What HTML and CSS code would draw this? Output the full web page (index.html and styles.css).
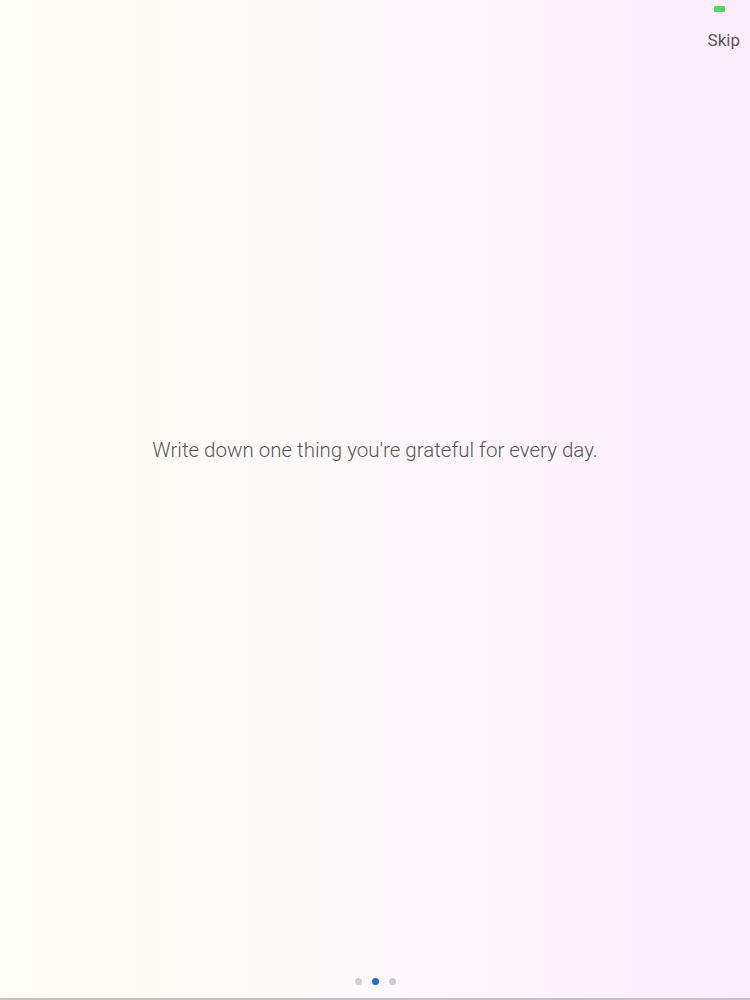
FILE: index.html
```html
<!DOCTYPE html>
<html>
<head>
<meta charset="utf-8">
<link rel="stylesheet" href="styles.css">
</head>
<body>
<div class="screen">
  <div class="status"><span class="battery"></span></div>
  <div class="topbar"><span class="skip">Skip</span></div>
  <div class="content">
    <p class="message">Write down one thing you're grateful for every day.</p>
  </div>
  <div class="pager">
    <span class="dot"></span>
    <span class="dot active"></span>
    <span class="dot"></span>
  </div>
  <div class="bottom-line"></div>
</div>
</body>
</html>
```
FILE: styles.css
```css
html, body {
  margin: 0;
  padding: 0;
}
.screen {
  width: 750px;
  height: 1000px;
  display: flex;
  flex-direction: column;
  background: linear-gradient(to right, #fffdf5 0%, #fefafb 45%, #fcedfd 100%);
  font-family: "Roboto", "Liberation Sans", sans-serif;
  color: #555558;
}
.status {
  height: 20px;
  display: flex;
  justify-content: flex-end;
  padding-right: 25px;
}
.battery {
  margin-top: 6px;
  width: 11px;
  height: 6px;
  background: #4cd964;
  border-radius: 1px;
}
.topbar {
  height: 40px;
  display: flex;
  justify-content: flex-end;
  padding-right: 10px;
}
.skip {
  font-size: 17px;
  font-weight: 400;
  line-height: 20px;
  margin-top: 10px;
  color: #58585c;
}
.content {
  flex: 1;
  display: flex;
  align-items: center;
  justify-content: center;
  padding-bottom: 138px;
}
.message {
  margin: 0;
  font-size: 20.5px;
  font-weight: 300;
  color: #57575b;
}
.pager {
  height: 20px;
  display: flex;
  justify-content: center;
  align-items: flex-start;
  gap: 10px;
}
.dot {
  width: 7px;
  height: 7px;
  border-radius: 50%;
  background: #cfcdd0;
}
.dot.active {
  background: #1a6fe0;
}
.bottom-line {
  height: 2px;
  background: #c6c2c6;
}
```
